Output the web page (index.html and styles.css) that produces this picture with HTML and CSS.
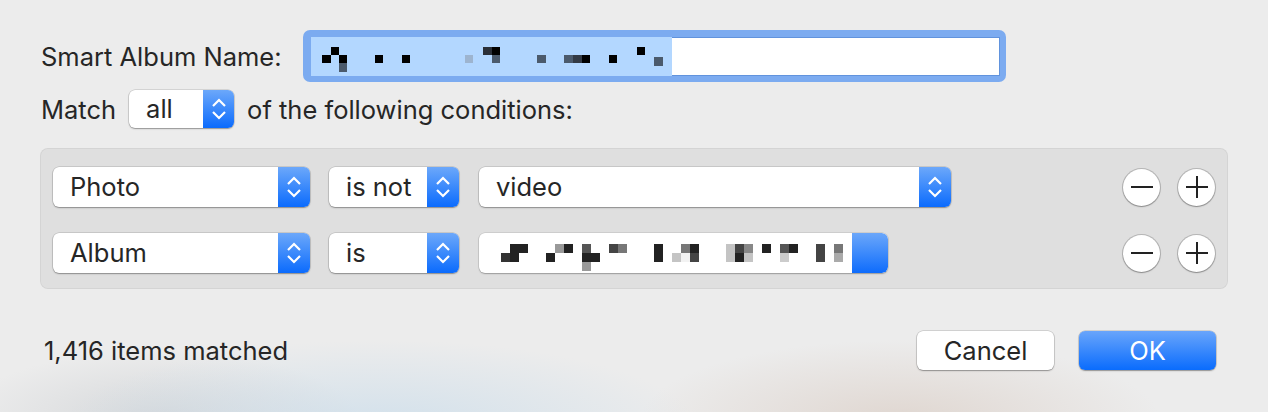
FILE: index.html
```html
<!DOCTYPE html>
<html lang="en">
<head>
  <meta charset="UTF-8" />
  <title>Smart Album</title>
  <link rel="stylesheet" href="styles.css">
</head>
<body>
  <div class="sheet">
    <div class="name-row">
      <label class="label name-label">Smart Album Name:</label>
      <div class="focus-ring">
        <div class="name-field">
          <div class="selection">
            <svg width="361" height="39" viewBox="0 0 361 39">
              <rect x="11" y="18" width="9" height="8" fill="#000"/>
              <rect x="20" y="10" width="8" height="8" fill="#000"/>
              <rect x="28" y="18" width="8" height="8" fill="#000"/>
              <rect x="28" y="26" width="8" height="9" fill="#4b5a6c"/>
              <rect x="64" y="18" width="8" height="8" fill="#000"/>
              <rect x="91" y="18" width="8" height="8" fill="#000"/>
              <rect x="154" y="18" width="8" height="8" fill="#9db4cf"/>
              <rect x="172" y="10" width="9" height="8" fill="#2a2f38"/>
              <rect x="181" y="10" width="8" height="8" fill="#000"/>
              <rect x="181" y="18" width="8" height="8" fill="#4b5a6c"/>
              <rect x="226" y="18" width="9" height="8" fill="#4b5a6c"/>
              <rect x="253" y="18" width="9" height="8" fill="#4b5a6c"/>
              <rect x="262" y="18" width="9" height="8" fill="#333a45"/>
              <rect x="271" y="18" width="8" height="8" fill="#000"/>
              <rect x="298" y="18" width="8" height="8" fill="#000"/>
              <rect x="326" y="10" width="8" height="8" fill="#000"/>
              <rect x="343" y="20" width="9" height="9" fill="#4b5a6c"/>
            </svg>
          </div>
          <div class="blank"></div>
        </div>
      </div>
    </div>

    <div class="match-row">
      <span class="label">Match</span>
      <div class="popup popup-all">
        <span class="popup-text">all</span>
        <span class="stepper">
          <svg width="16" height="26" viewBox="0 0 16 26"><path d="M2 10 L8 4 L14 10 M2 16 L8 22 L14 16" fill="none" stroke="#fff" stroke-width="2.2"/></svg>
        </span>
      </div>
      <span class="label">of the following conditions:</span>
    </div>

    <div class="conditions">
      <div class="cond-row">
        <div class="popup popup-key">
          <span class="popup-text">Photo</span>
          <span class="stepper"><svg width="16" height="26" viewBox="0 0 16 26"><path d="M2 10 L8 4 L14 10 M2 16 L8 22 L14 16" fill="none" stroke="#fff" stroke-width="2.2"/></svg></span>
        </div>
        <div class="popup popup-op">
          <span class="popup-text">is not</span>
          <span class="stepper"><svg width="16" height="26" viewBox="0 0 16 26"><path d="M2 10 L8 4 L14 10 M2 16 L8 22 L14 16" fill="none" stroke="#fff" stroke-width="2.2"/></svg></span>
        </div>
        <div class="popup popup-value">
          <span class="popup-text">video</span>
          <span class="stepper"><svg width="16" height="26" viewBox="0 0 16 26"><path d="M2 10 L8 4 L14 10 M2 16 L8 22 L14 16" fill="none" stroke="#fff" stroke-width="2.2"/></svg></span>
        </div>
        <div class="row-buttons">
          <button class="round-btn" aria-label="Remove"><svg width="22" height="22" viewBox="0 0 22 22"><path d="M0 11 H22" stroke="#222" stroke-width="2"/></svg></button>
          <button class="round-btn" aria-label="Add"><svg width="22" height="22" viewBox="0 0 22 22"><path d="M0 11 H22 M11 0 V22" stroke="#222" stroke-width="2"/></svg></button>
        </div>
      </div>

      <div class="cond-row">
        <div class="popup popup-key">
          <span class="popup-text">Album</span>
          <span class="stepper"><svg width="16" height="26" viewBox="0 0 16 26"><path d="M2 10 L8 4 L14 10 M2 16 L8 22 L14 16" fill="none" stroke="#fff" stroke-width="2.2"/></svg></span>
        </div>
        <div class="popup popup-op">
          <span class="popup-text">is</span>
          <span class="stepper"><svg width="16" height="26" viewBox="0 0 16 26"><path d="M2 10 L8 4 L14 10 M2 16 L8 22 L14 16" fill="none" stroke="#fff" stroke-width="2.2"/></svg></span>
        </div>
        <div class="album-field">
          <svg width="373" height="40" viewBox="0 0 373 40">
            <rect x="31" y="11" width="9" height="9" fill="#222"/>
            <rect x="40" y="11" width="9" height="9" fill="#222"/>
            <rect x="22" y="20" width="9" height="9" fill="#333"/>
            <rect x="31" y="20" width="9" height="9" fill="#222"/>
            <rect x="67" y="20" width="9" height="9" fill="#222"/>
            <rect x="76" y="11" width="9" height="9" fill="#999"/>
            <rect x="85" y="11" width="9" height="9" fill="#222"/>
            <rect x="103" y="11" width="9" height="9" fill="#555"/>
            <rect x="103" y="20" width="9" height="9" fill="#222"/>
            <rect x="112" y="20" width="9" height="9" fill="#222"/>
            <rect x="103" y="29" width="9" height="9" fill="#999"/>
            <rect x="130" y="11" width="9" height="9" fill="#444"/>
            <rect x="139" y="11" width="9" height="9" fill="#777"/>
            <rect x="175" y="11" width="9" height="18" fill="#222"/>
            <rect x="193" y="20" width="9" height="9" fill="#c4c4c4"/>
            <rect x="202" y="20" width="9" height="9" fill="#f2f2f2"/>
            <rect x="202" y="11" width="9" height="9" fill="#777"/>
            <rect x="211" y="11" width="9" height="9" fill="#222"/>
            <rect x="211" y="20" width="9" height="9" fill="#444"/>
            <rect x="247" y="11" width="9" height="18" fill="#c4c4c4"/>
            <rect x="256" y="11" width="9" height="9" fill="#444"/>
            <rect x="256" y="20" width="9" height="9" fill="#222"/>
            <rect x="265" y="11" width="9" height="9" fill="#888"/>
            <rect x="265" y="20" width="9" height="9" fill="#c4c4c4"/>
            <rect x="283" y="11" width="9" height="9" fill="#222"/>
            <rect x="301" y="11" width="9" height="9" fill="#555"/>
            <rect x="310" y="11" width="9" height="9" fill="#222"/>
            <rect x="301" y="20" width="9" height="9" fill="#ccc"/>
            <rect x="337" y="11" width="9" height="18" fill="#444"/>
            <rect x="355" y="11" width="9" height="9" fill="#777"/>
            <rect x="355" y="20" width="9" height="9" fill="#aaa"/>
          </svg>
          <span class="field-end"></span>
        </div>
        <div class="row-buttons">
          <button class="round-btn" aria-label="Remove"><svg width="22" height="22" viewBox="0 0 22 22"><path d="M0 11 H22" stroke="#222" stroke-width="2"/></svg></button>
          <button class="round-btn" aria-label="Add"><svg width="22" height="22" viewBox="0 0 22 22"><path d="M0 11 H22 M11 0 V22" stroke="#222" stroke-width="2"/></svg></button>
        </div>
      </div>
    </div>

    <div class="footer">
      <span class="label count">1,416 items matched</span>
      <div class="actions">
        <button class="push-btn">Cancel</button>
        <button class="push-btn default">OK</button>
      </div>
    </div>
  </div>
</body>
</html>
```

FILE: styles.css
```css
 html, body {
   margin: 0;
   height: 100%;
 }
 body {
   background:
     radial-gradient(ellipse 320px 90px at 380px 430px, rgba(200, 220, 235, 0.75), transparent),
     radial-gradient(ellipse 260px 80px at 900px 420px, rgba(215, 200, 190, 0.6), transparent),
     radial-gradient(ellipse 200px 70px at 160px 420px, rgba(190, 195, 200, 0.5), transparent),
     #ececec;
   color: #262626;
   font-family: 'Inter', 'Liberation Sans', sans-serif;
   font-size: 25.5px;
   overflow: hidden;
 }
 .sheet {
   padding: 30px 40px 0 40px;
 }
 .label {
   white-space: nowrap;
 }

 /* name */
 .name-row {
   display: flex;
   align-items: center;
   height: 52px;
 }
 .name-label {
   width: 263px;
   padding-left: 1px;
   box-sizing: border-box;
 }
 .focus-ring {
   width: 703px;
   height: 52px;
   box-sizing: border-box;
   background: #7cabf0;
   border-radius: 7px;
   padding: 7px 6px 6px 8px;
 }
 .name-field {
   display: flex;
   height: 39px;
 }
 .selection {
   width: 361px;
   background: #b3d7ff;
 }
 .selection svg {
   display: block;
 }
 .blank {
   flex: 1;
   background: #fff;
   border: 1px solid #6193dd;
   border-left: none;
 }

 /* match */
 .match-row {
   display: flex;
   align-items: center;
   gap: 13px;
   margin-top: 8px;
   padding-left: 1px;
   height: 38px;
 }

 .popup {
   display: flex;
   height: 40px;
   background: #fff;
   border-radius: 6px;
   box-shadow: 0 0 0 0.5px rgba(0, 0, 0, 0.2), 0 1px 1.5px rgba(0, 0, 0, 0.3);
   overflow: hidden;
   box-sizing: border-box;
 }
 .popup-text {
   flex: 1;
   padding-left: 17px;
   line-height: 40px;
 }
 .stepper {
   width: 32px;
   display: flex;
   align-items: center;
   justify-content: center;
   background: linear-gradient(#6ca8fa, #0b6bfd);
 }
 .popup-all {
   width: 105px;
   height: 38px;
 }
 .popup-all .popup-text {
   line-height: 38px;
 }
 .popup-all .stepper {
   width: 31px;
 }

 /* conditions */
 .conditions {
   margin-top: 20px;
   height: 141px;
   box-sizing: border-box;
   background: rgba(0, 0, 0, 0.055);
   border: 1px solid rgba(0, 0, 0, 0.05);
   border-radius: 8px;
   padding: 18px 12px 0 12px;
   display: flex;
   flex-direction: column;
   gap: 26px;
 }
 .cond-row {
   display: flex;
   align-items: center;
   height: 40px;
 }
 .popup-key {
   width: 257px;
 }
 .popup-op {
   width: 130px;
   margin-left: 19px;
 }
 .popup-value {
   width: 472px;
   margin-left: 20px;
 }
 .album-field {
   display: flex;
   width: 409px;
   height: 40px;
   margin-left: 20px;
   background: #fff;
   border-radius: 6px;
   box-shadow: 0 0 0 0.5px rgba(0, 0, 0, 0.15), 0 1px 1.5px rgba(0, 0, 0, 0.25);
   overflow: hidden;
 }
 .album-field svg {
   display: block;
 }
 .field-end {
   flex: 1;
   background: linear-gradient(#6ba7fa, #0e6cfc);
   border-radius: 0 6px 6px 0;
 }

 .row-buttons {
   margin-left: auto;
   display: flex;
   gap: 18px;
 }
 .round-btn {
   width: 37px;
   height: 37px;
   padding: 0;
   border: none;
   border-radius: 50%;
   background: #fff;
   box-shadow: 0 0 0 1px rgba(0, 0, 0, 0.18), 0 1px 1.5px rgba(0, 0, 0, 0.25);
   display: grid;
   place-items: center;
 }
 .round-btn svg {
   display: block;
 }

 /* footer */
 .footer {
   display: flex;
   align-items: center;
   margin-top: 42px;
   height: 39px;
 }
 .count {
   padding-left: 4px;
 }
 .actions {
   margin-left: auto;
   margin-right: 12px;
   display: flex;
   gap: 25px;
 }
 .push-btn {
   width: 137px;
   height: 39px;
   border: none;
   border-radius: 6px;
   background: #fff;
   color: #262626;
   font-family: inherit;
   font-size: 25.5px;
   box-shadow: 0 0 0 0.5px rgba(0, 0, 0, 0.22), 0 1px 1.5px rgba(0, 0, 0, 0.3);
   padding: 0;
 }
 .push-btn.default {
   background: linear-gradient(#69a5fb, #0a6cfd);
   color: #fff;
 }
```
